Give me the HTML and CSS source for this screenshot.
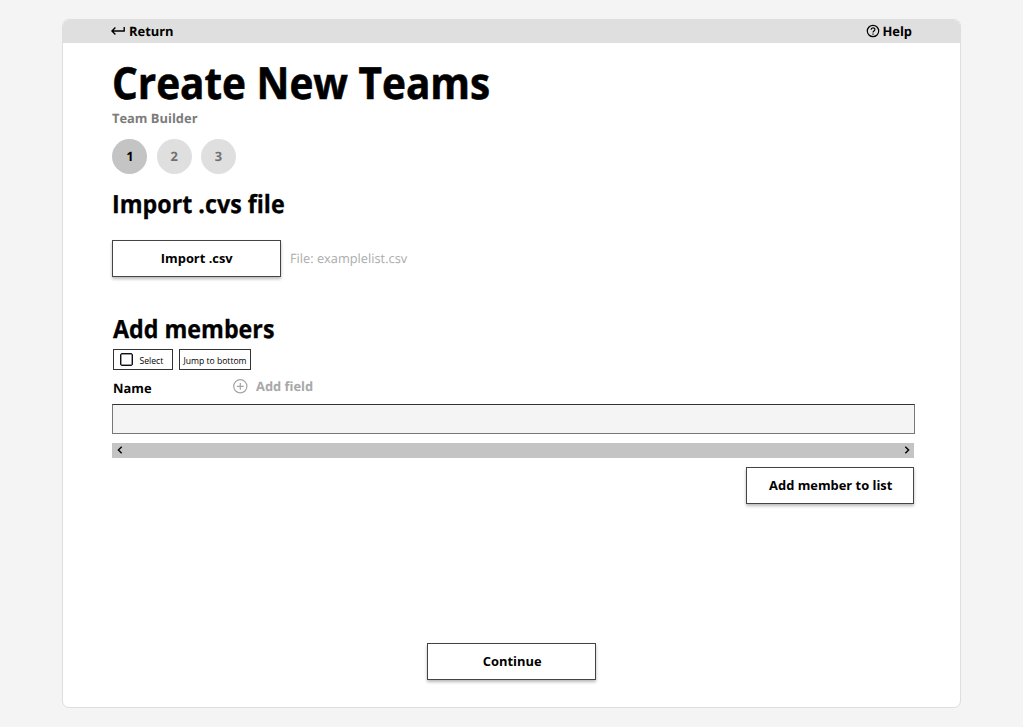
FILE: index.html
```html
<!DOCTYPE html>
<html lang="en">
<head>
<meta charset="utf-8">
<title>Create New Teams</title>
<link rel="stylesheet" href="styles.css">
</head>
<body>
<div class="window">
  <header class="topbar">
    <a class="toplink"><svg class="return-icon" width="14" height="10" viewBox="0 0 14 10"><path d="M13.2 1V5H1M4.4 1.6L1 5L4.4 8.4"/></svg><span>Return</span></a>
    <a class="toplink help"><svg class="help-icon" width="14" height="14" viewBox="0 0 14 14"><circle cx="7" cy="7" r="5.7"/><path d="M5.1 5.7C5.1 3.2 8.9 3.2 8.9 5.5C8.9 7 7 7 7 8.6"/><path d="M7 9.5V10.7"/></svg><span>Help</span></a>
  </header>
  <main class="content">
    <h1 class="title"><span>Create New Teams</span></h1>
    <p class="subtitle">Team Builder</p>
    <ol class="steps">
      <li class="step current">1</li>
      <li class="step">2</li>
      <li class="step">3</li>
    </ol>
    <h2 class="heading heading-import"><span>Import .cvs file</span></h2>
    <div class="import-row">
      <button class="button">Import .csv</button>
      <span class="filename">File: examplelist.csv</span>
    </div>
    <h2 class="heading heading-members"><span>Add members</span></h2>
    <div class="tools">
      <button class="tool select"><i class="checkbox"></i><span>Select</span></button>
      <button class="tool jump">Jump to bottom</button>
    </div>
    <div class="fields">
      <span class="name">Name</span>
      <svg class="plus" width="16" height="16" viewBox="0 0 16 16"><circle cx="8.3" cy="8.3" r="6.6"/><path d="M8.3 4.9V11.7M4.9 8.3H11.7"/></svg>
      <span class="add-field">Add field</span>
    </div>
    <div class="input"></div>
    <div class="scrollbar">
      <svg width="6" height="8" viewBox="0 0 6 8"><path d="M4.7 0.7L1.4 4L4.7 7.3"/></svg>
      <svg width="6" height="8" viewBox="0 0 6 8"><path d="M1.3 0.7L4.6 4L1.3 7.3"/></svg>
    </div>
    <button class="button add-member">Add member to list</button>
    <button class="button continue">Continue</button>
  </main>
</div>
</body>
</html>
```
FILE: styles.css
```css
* { box-sizing: border-box; }
body { margin: 0; height: 727px; padding: 19px 62px 0; background: #f4f4f4; font-family: "Open Sans", "Noto Sans", sans-serif; font-size: 12.9px; color: #000; overflow: hidden; text-rendering: geometricPrecision; }
h1, h2, p, ol { margin: 0; padding: 0; }
svg { display: block; flex: none; fill: none; stroke: #000; stroke-width: 1.4; }
.window { width: 899px; height: 689px; background: #fff; border: 1px solid #dedede; border-radius: 7px; overflow: hidden; }
.topbar { height: 23px; background: #dfdfdf; display: flex; justify-content: space-between; padding: 0 48px; font-weight: 700; line-height: 22px; }
.toplink { display: flex; align-items: center; gap: 4px; height: 22px; }
.help { gap: 2.5px; }
.help-icon { stroke-width: 1.2; }
.content { display: flex; flex-direction: column; padding: 0 46px 0 49px; }
.title { height: 66px; padding-top: 11px; font-size: 44px; line-height: 57px; font-weight: 700; white-space: nowrap; }
.title span, .heading span { display: inline-block; transform-origin: 0 50%; }
.title span { transform: scaleX(0.92); -webkit-text-stroke: 0.6px #000; }
.subtitle { height: 30px; line-height: 18px; color: #7c7c7c; font-weight: 700; }
.steps { display: flex; gap: 9.3px; list-style: none; height: 35px; padding-left: 0.4px; }
.step { width: 35px; height: 35px; border-radius: 50%; background: #dfdfdf; color: #717171; font-weight: 700; line-height: 35px; text-align: center; }
.current { background: #c4c4c4; color: #000; }
.heading { font-size: 25px; line-height: 34px; font-weight: 700; white-space: nowrap; }
.heading span { transform: scaleX(0.93); -webkit-text-stroke: 0.3px #000; }
.heading-import { margin-top: 13px; }
.import-row { display: flex; align-items: center; gap: 9.5px; margin-top: 19px; }
.button { width: 168.5px; height: 37px; flex: none; padding: 0 0 0 1px; border: 1px solid #444; border-radius: 0; background: #fff; box-shadow: 0 2px 3px rgba(0,0,0,.28); font: 700 12.9px/35px "Open Sans", sans-serif; color: #000; }
.filename { color: #acacac; padding-bottom: 1px; font-size: 12.8px; }
.heading-members { margin: 35px 0 0 1px; }
.tools { display: flex; gap: 6px; margin: 3px 0 0 1px; }
.tool { height: 21px; padding: 1px 0 0; border: 1px solid #333; border-radius: 0; background: #fff; color: #000; font: 8.6px/18px "Open Sans", sans-serif; white-space: nowrap; }
.select { width: 60px; display: flex; align-items: center; gap: 6.5px; padding-left: 6px; }
.select span { padding-top: 1px; }
.checkbox { width: 13px; height: 13px; margin-bottom: 1px; border: 1.5px solid #111; border-radius: 2px; box-shadow: inset 0 0 0 0.5px #333; }
.jump { width: 72px; padding-top: 2px; }
.fields { height: 34px; display: flex; align-items: flex-start; padding: 6px 0 0 1px; line-height: 20px; font-weight: 700; }
.name { width: 119px; padding-top: 1.5px; }
.plus { stroke: #a5a5a5; stroke-width: 1.2; margin-top: 2px; }
.add-field { margin-left: 8px; color: #a8a8a8; }
.input { width: 802.5px; height: 30px; border: 1px solid #777; border-top-color: #333; background: #f4f4f4; }
.scrollbar { height: 15px; margin-top: 9px; padding: 0 4px 1px 5px; background: #c4c4c4; display: flex; justify-content: space-between; align-items: center; }
.add-member { align-self: flex-end; margin-top: 9px; padding-left: 2px; }
.continue { margin: 139px 0 0 315px; padding: 0 0 1px 2px; }
```
